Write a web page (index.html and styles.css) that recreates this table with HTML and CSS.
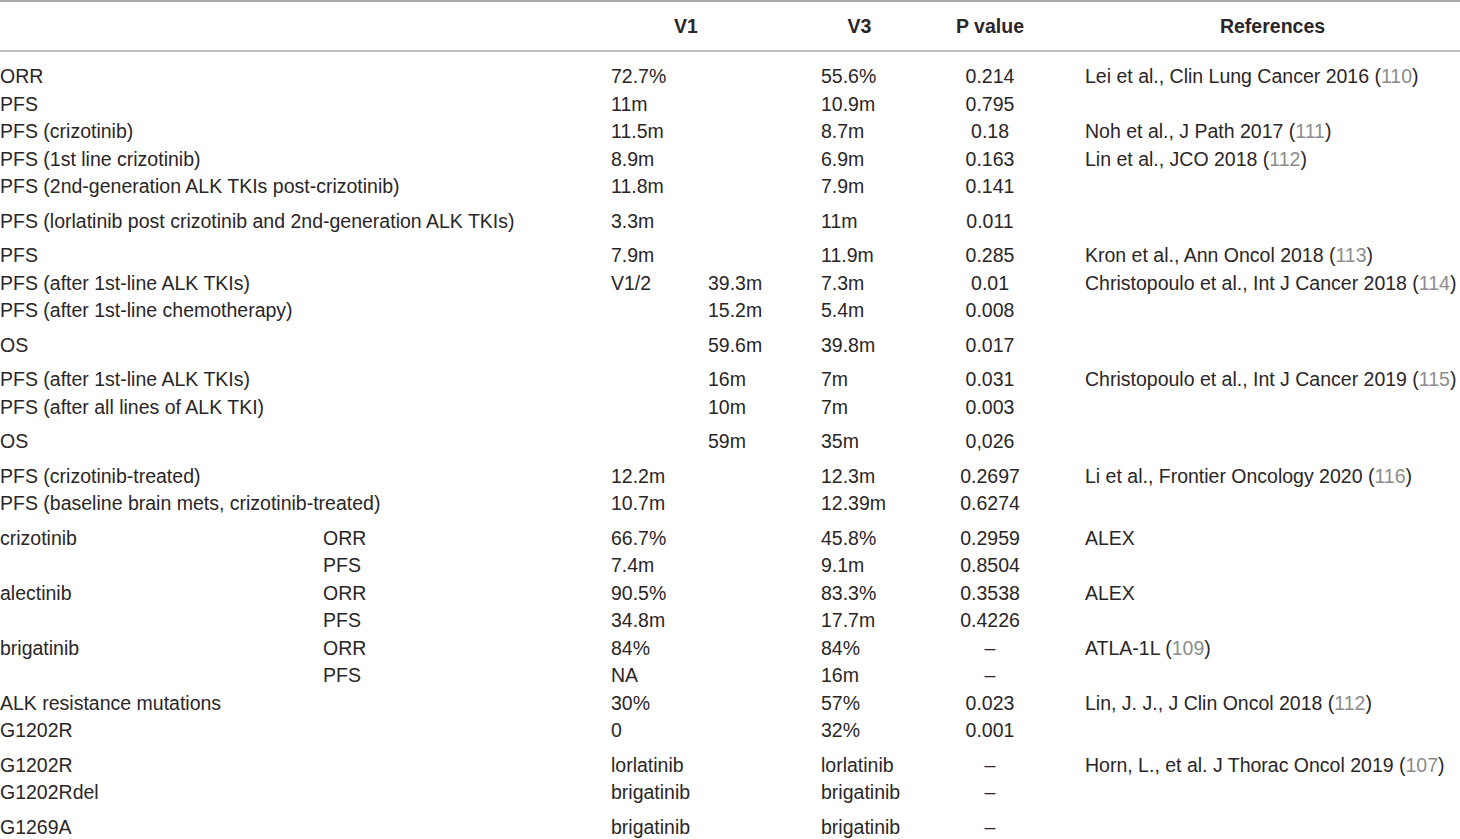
FILE: index.html
```html
<!DOCTYPE html>
<html lang="en">
<head>
    <meta charset="UTF-8">
    <meta name="viewport" content="width=device-width, initial-scale=1.0">
    <title>ALK variants and outcomes</title>
    <link rel="stylesheet" href="styles.css">
</head>
<body>
    <table class="data-table">
        <colgroup>
            <col class="c-label">
            <col class="c-sub">
            <col class="c-v1a">
            <col class="c-v1b">
            <col class="c-v3">
            <col class="c-p">
            <col class="c-ref">
        </colgroup>
        <thead>
            <tr>
                <th colspan="2"></th>
                <th colspan="2" class="h-v1">V1</th>
                <th class="h-v3">V3</th>
                <th class="h-p">P value</th>
                <th class="h-ref">References</th>
            </tr>
        </thead>
        <tbody>
            <tr class="first">
                <td colspan="2">ORR</td><td colspan="2">72.7%</td><td>55.6%</td><td class="p">0.214</td>
                <td class="ref">Lei et al., Clin Lung Cancer 2016 (<span class="cite">110</span>)</td>
            </tr>
            <tr>
                <td colspan="2">PFS</td><td colspan="2">11m</td><td>10.9m</td><td class="p">0.795</td><td class="ref"></td>
            </tr>
            <tr>
                <td colspan="2">PFS (crizotinib)</td><td colspan="2">11.5m</td><td>8.7m</td><td class="p">0.18</td>
                <td class="ref">Noh et al., J Path 2017 (<span class="cite">111</span>)</td>
            </tr>
            <tr>
                <td colspan="2">PFS (1st line crizotinib)</td><td colspan="2">8.9m</td><td>6.9m</td><td class="p">0.163</td>
                <td class="ref">Lin et al., JCO 2018 (<span class="cite">112</span>)</td>
            </tr>
            <tr class="gap">
                <td colspan="2">PFS (2nd-generation ALK TKIs post-crizotinib)</td><td colspan="2">11.8m</td><td>7.9m</td><td class="p">0.141</td><td class="ref"></td>
            </tr>
            <tr class="gap">
                <td colspan="2">PFS (lorlatinib post crizotinib and 2nd-generation ALK TKIs)</td><td colspan="2">3.3m</td><td>11m</td><td class="p">0.011</td><td class="ref"></td>
            </tr>
            <tr>
                <td colspan="2">PFS</td><td colspan="2">7.9m</td><td>11.9m</td><td class="p">0.285</td>
                <td class="ref">Kron et al., Ann Oncol 2018 (<span class="cite">113</span>)</td>
            </tr>
            <tr>
                <td colspan="2">PFS (after 1st-line ALK TKIs)</td><td>V1/2</td><td>39.3m</td><td>7.3m</td><td class="p">0.01</td>
                <td class="ref">Christopoulo et al., Int J Cancer 2018 (<span class="cite">114</span>)</td>
            </tr>
            <tr class="gap">
                <td colspan="2">PFS (after 1st-line chemotherapy)</td><td></td><td>15.2m</td><td>5.4m</td><td class="p">0.008</td><td class="ref"></td>
            </tr>
            <tr class="gap">
                <td colspan="2">OS</td><td></td><td>59.6m</td><td>39.8m</td><td class="p">0.017</td><td class="ref"></td>
            </tr>
            <tr>
                <td colspan="2">PFS (after 1st-line ALK TKIs)</td><td></td><td>16m</td><td>7m</td><td class="p">0.031</td>
                <td class="ref">Christopoulo et al., Int J Cancer 2019 (<span class="cite">115</span>)</td>
            </tr>
            <tr class="gap">
                <td colspan="2">PFS (after all lines of ALK TKI)</td><td></td><td>10m</td><td>7m</td><td class="p">0.003</td><td class="ref"></td>
            </tr>
            <tr class="gap">
                <td colspan="2">OS</td><td></td><td>59m</td><td>35m</td><td class="p">0,026</td><td class="ref"></td>
            </tr>
            <tr>
                <td colspan="2">PFS (crizotinib-treated)</td><td colspan="2">12.2m</td><td>12.3m</td><td class="p">0.2697</td>
                <td class="ref">Li et al., Frontier Oncology 2020 (<span class="cite">116</span>)</td>
            </tr>
            <tr class="gap">
                <td colspan="2">PFS (baseline brain mets, crizotinib-treated)</td><td colspan="2">10.7m</td><td>12.39m</td><td class="p">0.6274</td><td class="ref"></td>
            </tr>
            <tr>
                <td>crizotinib</td><td>ORR</td><td colspan="2">66.7%</td><td>45.8%</td><td class="p">0.2959</td><td class="ref">ALEX</td>
            </tr>
            <tr>
                <td></td><td>PFS</td><td colspan="2">7.4m</td><td>9.1m</td><td class="p">0.8504</td><td class="ref"></td>
            </tr>
            <tr>
                <td>alectinib</td><td>ORR</td><td colspan="2">90.5%</td><td>83.3%</td><td class="p">0.3538</td><td class="ref">ALEX</td>
            </tr>
            <tr>
                <td></td><td>PFS</td><td colspan="2">34.8m</td><td>17.7m</td><td class="p">0.4226</td><td class="ref"></td>
            </tr>
            <tr>
                <td>brigatinib</td><td>ORR</td><td colspan="2">84%</td><td>84%</td><td class="p">–</td>
                <td class="ref">ATLA-1L (<span class="cite">109</span>)</td>
            </tr>
            <tr>
                <td></td><td>PFS</td><td colspan="2">NA</td><td>16m</td><td class="p">–</td><td class="ref"></td>
            </tr>
            <tr>
                <td colspan="2">ALK resistance mutations</td><td colspan="2">30%</td><td>57%</td><td class="p">0.023</td>
                <td class="ref">Lin, J. J., J Clin Oncol 2018 (<span class="cite">112</span>)</td>
            </tr>
            <tr class="gap">
                <td colspan="2">G1202R</td><td colspan="2">0</td><td>32%</td><td class="p">0.001</td><td class="ref"></td>
            </tr>
            <tr>
                <td colspan="2">G1202R</td><td colspan="2">lorlatinib</td><td>lorlatinib</td><td class="p">–</td>
                <td class="ref">Horn, L., et al. J Thorac Oncol 2019 (<span class="cite">107</span>)</td>
            </tr>
            <tr class="gap">
                <td colspan="2">G1202Rdel</td><td colspan="2">brigatinib</td><td>brigatinib</td><td class="p">–</td><td class="ref"></td>
            </tr>
            <tr>
                <td colspan="2">G1269A</td><td colspan="2">brigatinib</td><td>brigatinib</td><td class="p">–</td><td class="ref"></td>
            </tr>
        </tbody>
    </table>
</body>
</html>
```

FILE: styles.css
```css
/* 基础重置 */
* {
    margin: 0;
    padding: 0;
    box-sizing: border-box;
}

body {
    background: #ffffff;
    color: #2a2627;
    font-family: 'Liberation Sans', Arial, sans-serif;
    font-size: 19.5px;
    overflow: hidden;
}

/* 表格 */
.data-table {
    width: 1460px;
    border-collapse: collapse;
    table-layout: fixed;
    border-top: 2px solid #a9a9a9;
}

.c-label { width: 323px; }
.c-sub { width: 288px; }
.c-v1a { width: 97px; }
.c-v1b { width: 113px; }
.c-v3 { width: 119px; }
.c-p { width: 100px; }
.c-ref { width: 420px; }

/* 表头 */
.data-table thead tr {
    height: 50px;
    border-bottom: 2px solid #bdbdbd;
}

.data-table th {
    font-weight: bold;
    text-align: center;
    vertical-align: middle;
    white-space: nowrap;
}

.h-v1 { padding-right: 60px; }
.h-v3 { padding-right: 42px; }
.h-ref { padding-left: 45px; }

/* 数据行 */
.data-table td {
    line-height: 27.5px;
    vertical-align: top;
    text-align: left;
    white-space: nowrap;
    padding: 0;
}

.data-table tr.first td {
    padding-top: 11px;
}

.data-table tr.gap td {
    padding-bottom: 7px;
}

.data-table td.p {
    text-align: center;
}

.data-table td.ref {
    padding-left: 45px;
}

.cite {
    color: #8c8c8c;
}
```
